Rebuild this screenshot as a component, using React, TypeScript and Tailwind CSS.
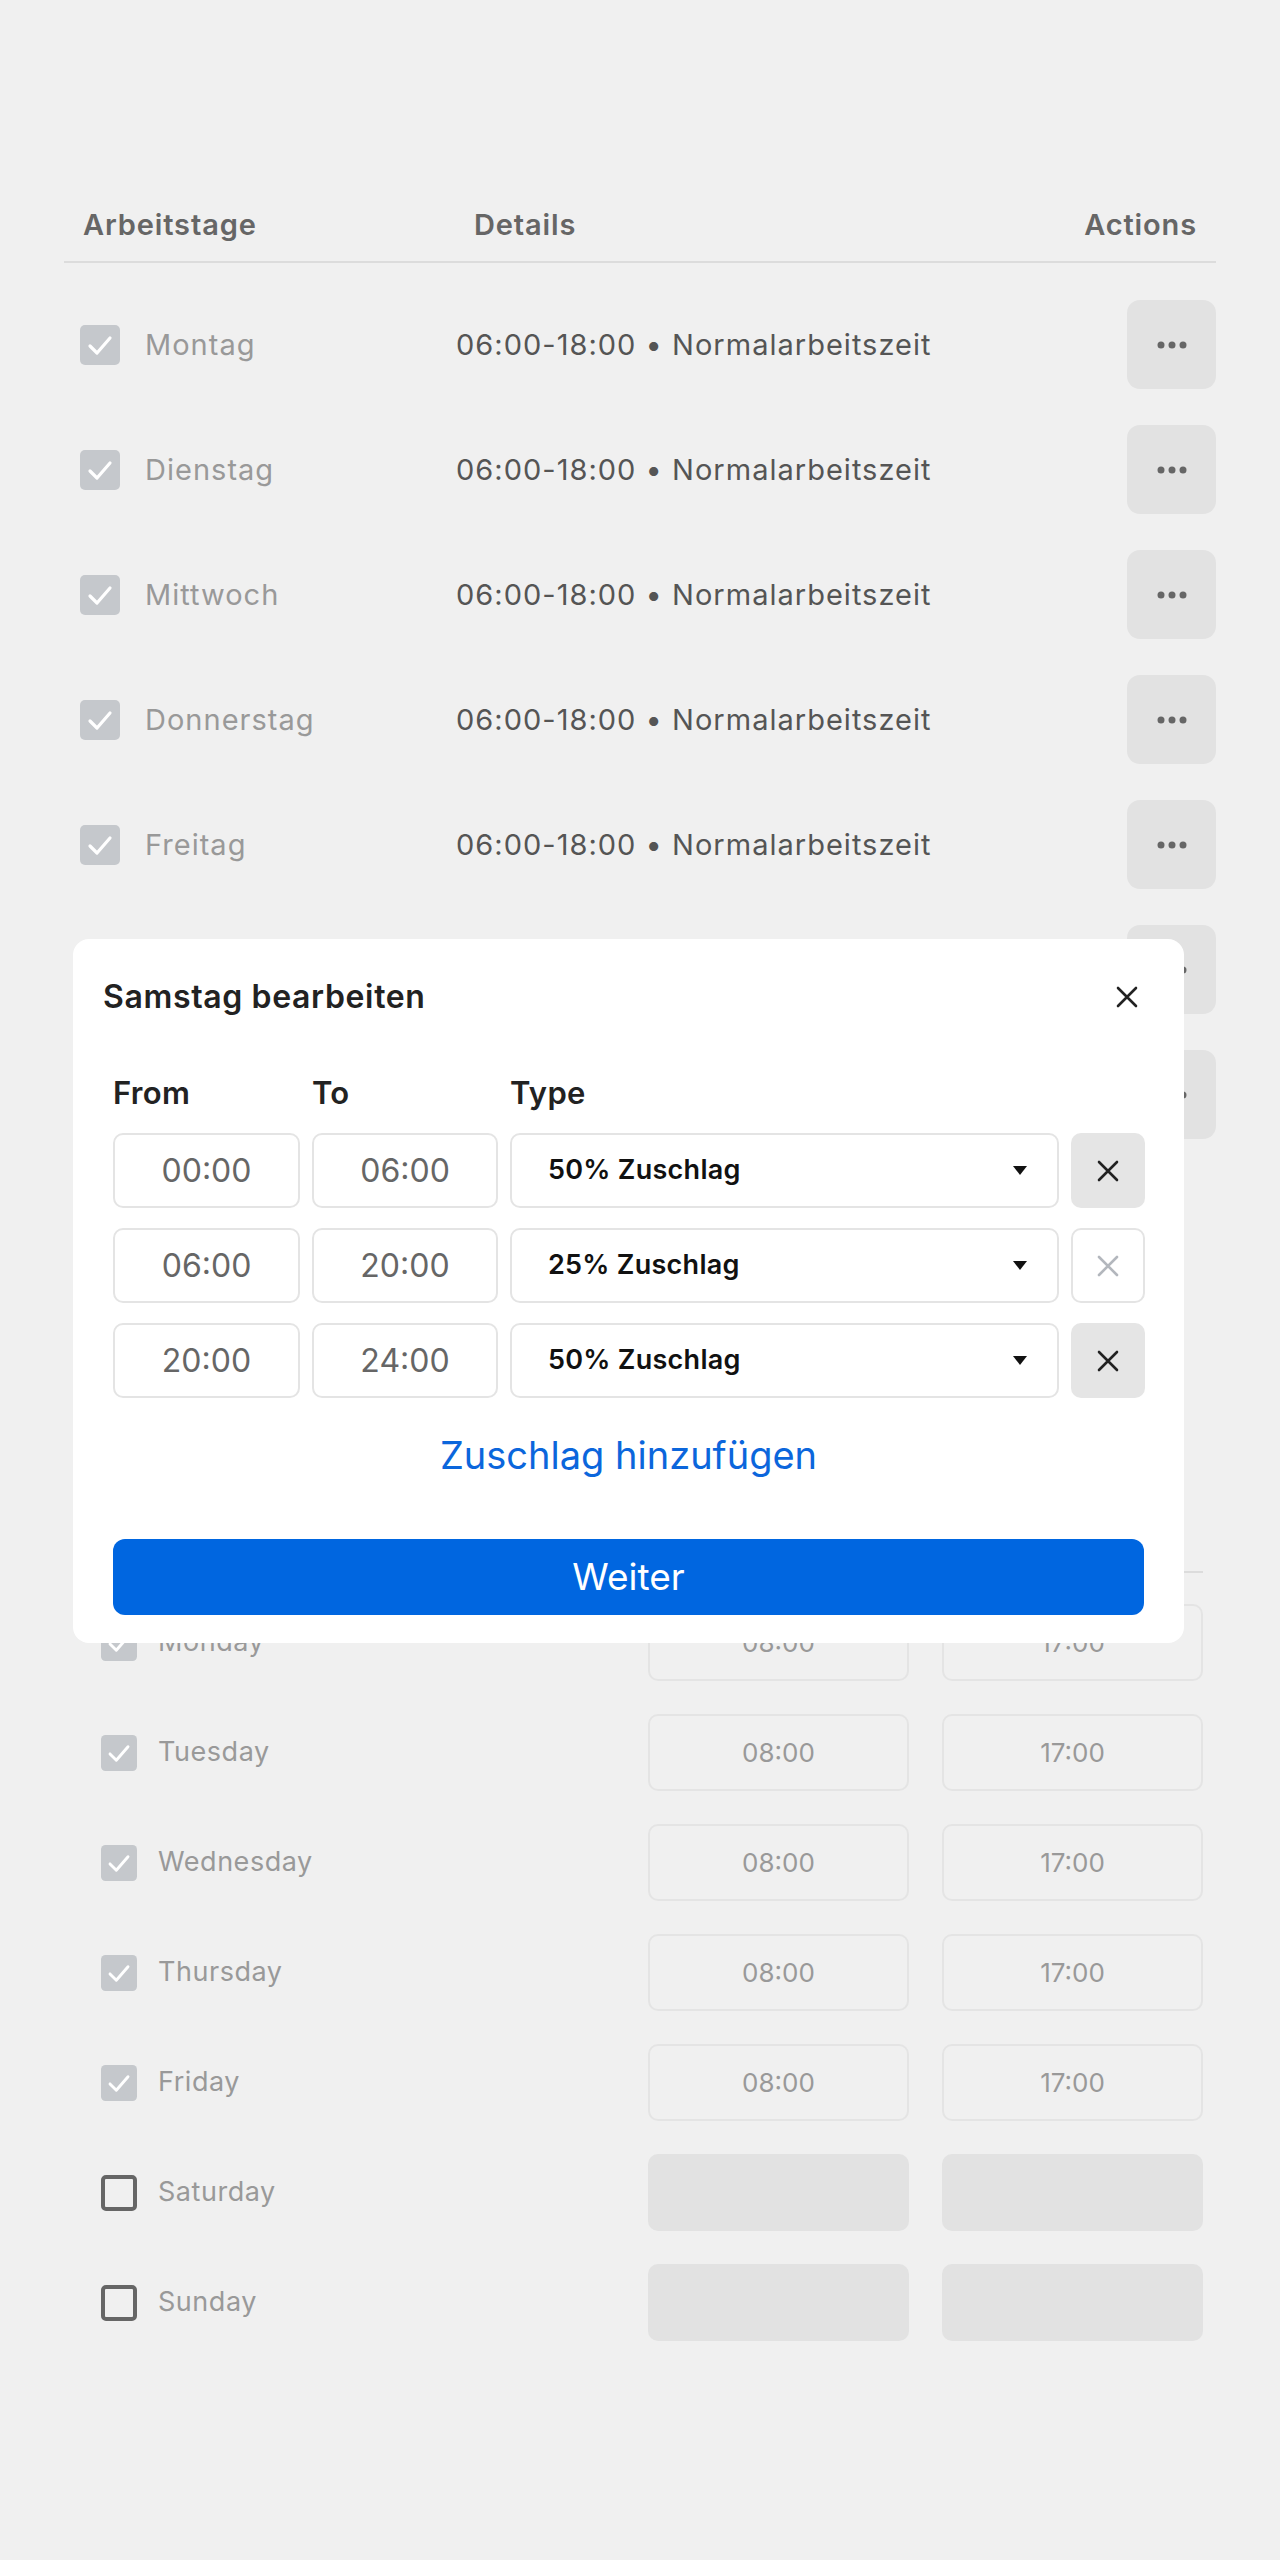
import React from "react";

const WORK_DAYS = ["Montag", "Dienstag", "Mittwoch", "Donnerstag", "Freitag", "Samstag", "Sonntag"];
// rows that sit under the dialog only show their action button
const COVERED = new Set(["Samstag", "Sonntag"]);

const WEEK = [
  { day: "Monday", on: true },
  { day: "Tuesday", on: true },
  { day: "Wednesday", on: true },
  { day: "Thursday", on: true },
  { day: "Friday", on: true },
  { day: "Saturday", on: false },
  { day: "Sunday", on: false },
];

const SLOTS = [
  { from: "00:00", to: "06:00", type: "50% Zuschlag", removable: true },
  { from: "06:00", to: "20:00", type: "25% Zuschlag", removable: false },
  { from: "20:00", to: "24:00", type: "50% Zuschlag", removable: true },
];

function Check({ size }: { size: number }) {
  return (
    <svg width={size} height={size} viewBox="0 0 40 40" className="shrink-0">
      <rect x="0" y="0" width="40" height="40" rx="5" fill="#c5c8cc" />
      <path d="M10 21 L17 28 L30 13" fill="none" stroke="#fff" strokeWidth="3.2" strokeLinecap="round" strokeLinejoin="round" />
    </svg>
  );
}

function EmptyBox() {
  return <div className="h-[36px] w-[36px] shrink-0 rounded-[5px] border-[4px] border-[#666]" />;
}

function XIcon({ color, size = 22 }: { color: string; size?: number }) {
  return (
    <svg width={size} height={size} viewBox="0 0 22 22">
      <path d="M2 2 L20 20 M20 2 L2 20" stroke={color} strokeWidth="2.6" strokeLinecap="round" />
    </svg>
  );
}

function Dots() {
  return (
    <svg width="30" height="8" viewBox="0 0 30 8">
      <circle cx="4" cy="4" r="3.5" fill="#666" />
      <circle cx="15" cy="4" r="3.5" fill="#666" />
      <circle cx="26" cy="4" r="3.5" fill="#666" />
    </svg>
  );
}

export default function App() {
  return (
    <div className="relative min-h-[2560px] bg-[#f0f0f0] font-['Inter',sans-serif]">
      {/* Arbeitstage table */}
      <section className="px-16 pt-[205px]">
        <div className="flex h-[40px] items-center text-[29px] font-semibold tracking-[0.03em] text-[#666]">
          <div className="w-[410px] pl-[19px]">Arbeitstage</div>
          <div className="flex-1">Details</div>
          <div className="pr-[19px]">Actions</div>
        </div>
        <div className="mt-[16px] h-[2px] bg-[#dcdcdc]" />
        <div className="flex flex-col gap-[36px] pt-[37px]">
          {WORK_DAYS.map((d) => (
            <div key={d} className="flex h-[89px] items-center">
              {COVERED.has(d) ? (
                <div className="flex-1" />
              ) : (
                <>
                  <div className="flex w-[392px] items-center gap-[25px] pl-4">
                    <Check size={40} />
                    <span className="text-[29px] tracking-[0.035em] text-[#999]">{d}</span>
                  </div>
                  <div className="flex-1 text-[29px] tracking-[0.035em] text-[#555]">
                    06:00-18:00 • Normalarbeitszeit
                  </div>
                </>
              )}
              <button className="flex h-[89px] w-[89px] items-center justify-center rounded-[13px] bg-[#e2e2e2]">
                <Dots />
              </button>
            </div>
          ))}
        </div>
      </section>

      {/* Weekly hours table (header is covered by the dialog) */}
      <section className="ml-[88px] mr-[77px] mt-[360px]">
        <div className="h-[40px]" />
        <div className="mt-[32px] h-[2px] bg-[#dcdcdc]" />
        <div className="flex flex-col gap-[33px] pt-[31px]">
          {WEEK.map((w) => (
            <div key={w.day} className="flex h-[77px] items-center">
              <div className="flex items-center gap-[21px] pl-[13px]">
                {w.on ? <Check size={36} /> : <EmptyBox />}
                <span className="text-[27px] tracking-[0.02em] text-[#999]">{w.day}</span>
              </div>
              <div className="ml-auto flex gap-[33px]">
                {["08:00", "17:00"].map((t) => (
                  <div
                    key={t}
                    className={
                      w.on
                        ? "flex h-[77px] w-[261px] items-center justify-center rounded-[10px] border-2 border-[#e4e4e4] text-[26px] text-[#999]"
                        : "h-[77px] w-[261px] rounded-[10px] bg-[#e2e2e2]"
                    }
                  >
                    {w.on ? t : null}
                  </div>
                ))}
              </div>
            </div>
          ))}
        </div>
      </section>

      {/* Edit dialog */}
      <div className="absolute left-[73px] top-[939px] h-[704px] w-[1111px] rounded-[16px] bg-white px-[40px] pt-[38px]">
        <div className="flex h-[40px] items-center justify-between">
          <h2 className="-ml-[10px] text-[32px] font-semibold tracking-[0.02em] text-[#222]">Samstag bearbeiten</h2>
          <button className="-mr-[3px] flex h-[40px] w-[40px] items-center justify-center">
            <XIcon color="#222" />
          </button>
        </div>

        <div className="mt-[58px] grid grid-cols-[187px_186px_549px_74px] gap-x-[12px] text-[31px] font-semibold leading-[36px] tracking-[0.01em] text-[#222]">
          <div>From</div>
          <div>To</div>
          <div>Type</div>
          <div />
        </div>

        <div className="mt-[22px] flex flex-col gap-[20px]">
          {SLOTS.map((s, i) => (
            <div key={i} className="grid h-[75px] grid-cols-[187px_186px_549px_74px] gap-x-[12px]">
              <div className="flex items-center justify-center rounded-[10px] border-2 border-[#e4e4e4] text-[32px] text-[#666]">
                {s.from}
              </div>
              <div className="flex items-center justify-center rounded-[10px] border-2 border-[#e4e4e4] text-[32px] text-[#666]">
                {s.to}
              </div>
              <div className="flex items-center justify-between rounded-[10px] border-2 border-[#e4e4e4] pl-[36px] pr-[30px]">
                <span className="text-[27px] font-semibold tracking-[0.01em] text-[#111]">{s.type}</span>
                <svg width="14" height="9" viewBox="0 0 14 9">
                  <path d="M0 0 H14 L7 9 Z" fill="#111" />
                </svg>
              </div>
              <button
                className={
                  s.removable
                    ? "flex items-center justify-center rounded-[10px] bg-[#e5e5e5]"
                    : "flex items-center justify-center rounded-[10px] border-2 border-[#e4e4e4] bg-white"
                }
              >
                <XIcon color={s.removable ? "#222" : "#b3b7bd"} />
              </button>
            </div>
          ))}
        </div>

        <div className="mt-[35px] text-center text-[38px] leading-[44px] text-[#0b66dc]">Zuschlag hinzufügen</div>

        <button className="mt-[62px] flex h-[76px] w-full items-center justify-center rounded-[12px] bg-[#0066e0] text-[37px] text-white">
          Weiter
        </button>
      </div>
    </div>
  );
}
